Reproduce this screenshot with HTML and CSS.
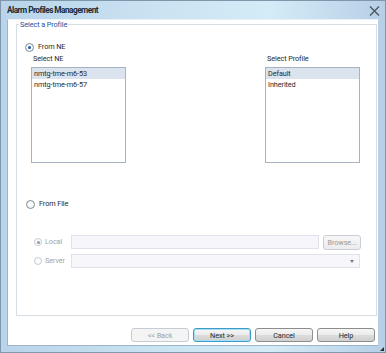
FILE: index.html
```html
<!DOCTYPE html>
<html>
<head>
<meta charset="utf-8">
<link rel="stylesheet" href="styles.css">
</head>
<body>
<div class="window">
  <div class="titlebar">
    <span class="title">Alarm Profiles Management</span>
    <span class="close">
      <svg width="11" height="10" viewBox="0 0 11 10"><path d="M1 0.5 L10 9.5 M10 0.5 L1 9.5" stroke="#4a5864" stroke-width="1.4" fill="none"/></svg>
    </span>
  </div>
  <div class="client">
    <fieldset class="group">
      <legend class="legend">Select a Profile</legend>
      <div class="radio-row from-ne">
        <span class="radio checked"></span><span class="rlabel">From NE</span>
      </div>
      <div class="lists">
        <div class="listcol">
          <div class="caption">Select NE</div>
          <div class="listbox">
            <div class="item sel">nmtg-tme-m6-53</div>
            <div class="item">nmtg-tme-m6-57</div>
          </div>
        </div>
        <div class="listcol">
          <div class="caption">Select Profile</div>
          <div class="listbox">
            <div class="item sel">Default</div>
            <div class="item">Inherited</div>
          </div>
        </div>
      </div>
      <div class="radio-row from-file">
        <span class="radio"></span><span class="rlabel">From File</span>
      </div>
      <div class="file-rows">
        <div class="frow">
          <span class="radio small dis checked"></span><span class="rlabel dis">Local</span>
          <span class="field"></span>
          <span class="browse">Browse...</span>
        </div>
        <div class="frow">
          <span class="radio small dis"></span><span class="rlabel dis">Server</span>
          <span class="combo"><span class="arrow"></span></span>
        </div>
      </div>
    </fieldset>
    <div class="buttons">
      <span class="btn disabled">&lt;&lt; Back</span>
      <span class="btn focus">Next &gt;&gt;</span>
      <span class="btn">Cancel</span>
      <span class="btn">Help</span>
    </div>
  </div>
  <span class="grip"></span>
</div>
</body>
</html>
```
FILE: styles.css
```css
* { box-sizing: border-box; }
html, body { margin: 0; padding: 0; }
body {
  width: 386px; height: 353px; overflow: hidden;
  font-family: Roboto, "Open Sans", sans-serif;
  font-size: 7.3px; letter-spacing: -0.1px; color: #2a2a2a;
}
.window {
  position: relative;
  width: 386px; height: 353px;
  border: 1px solid #7f97ab;
  background: linear-gradient(90deg, #b9d3ea 0%, #c9e3f2 40%, #d3ecf7 70%, #b7cfe6 100%);
  display: flex; flex-direction: column;
}
.titlebar {
  height: 18px; flex: none;
  display: flex; align-items: center; justify-content: space-between;
  padding: 0 5px 0 6px;
}
.title {
  font-family: Roboto, sans-serif;
  font-weight: 700; font-size: 8.3px; color: #1e2a36;
  letter-spacing: -0.55px;
}
.close { display: flex; align-items: center; padding-top: 2px; }
.client {
  flex: 1;
  margin: 0 7px 6px 6px;
  background: #fff;
  border-left: 1px solid #9fb4c6;
  border-bottom: 1px solid #9fb4c6;
  border-top: 1px solid #e8f1f8;
  display: flex; flex-direction: column;
  padding: 0 1px 0 8px;
}
.group {
  margin: 0; padding: 0;
  border: 1px solid #d6dde3;
  height: 296px;
  min-width: 0;
}
.legend {
  padding: 0 1px; margin-left: 2px;
  color: #2552a0; line-height: 9px;
}
.radio-row { display: flex; align-items: center; }
.from-ne { margin: 13px 0 0 8px; height: 10px; }
.radio {
  width: 9px; height: 9px; border-radius: 50%;
  border: 1px solid #7d8b98;
  background: radial-gradient(circle, #ffffff 0%, #eef2f6 100%);
  position: relative;
  flex: none;
}
.radio.checked::after {
  content: ""; position: absolute; left: 2px; top: 2px;
  width: 3px; height: 3px; border-radius: 50%;
  background: #1c56a8;
}
.rlabel { margin-left: 4px; line-height: 10px; }
.lists { display: flex; justify-content: space-between; margin: 2px 16px 0 14px; }
.caption { line-height: 10px; margin-left: 2px; margin-bottom: 3px; }
.listbox {
  width: 95px; height: 96px;
  border: 1px solid #a7b3c0;
  background: #fff;
}
.item { height: 11px; line-height: 11px; padding-left: 2px; }
.item.sel { background: #dbe3ef; }
.from-file { margin: 36px 0 0 9px; height: 10px; }
.file-rows { margin: 26px 0 0 17px; display: flex; flex-direction: column; gap: 5px; }
.frow { display: flex; align-items: center; height: 14px; }
.radio.small { width: 8px; height: 8px; }
.radio.dis { border-color: #c5ccd3; background: #fbfbfc; }
.radio.dis.checked::after { left: 1.5px; top: 1.5px; background: #8f99a6; }
.rlabel.dis { color: #a3a3a3; width: 26px; margin-left: 3px; }
.field {
  width: 248px; height: 14px;
  border: 1px solid #dfe2ea; background: #f7f7fb;
}
.browse {
  margin-left: 4px; width: 38px; height: 15px;
  border: 1px solid #c9ced6; border-radius: 3px;
  background: linear-gradient(#f7f7f7, #ececec);
  color: #9b9b9b;
  display: flex; align-items: center; justify-content: center;
}
.combo {
  width: 289px; height: 14px;
  border: 1px solid #dfe2ea; background: #f7f7fb;
  position: relative;
}
.arrow {
  position: absolute; right: 5px; top: 5px;
  border-left: 2.5px solid transparent; border-right: 2.5px solid transparent;
  border-top: 3px solid #7a7a7a;
}
.buttons {
  display: flex; justify-content: flex-end; gap: 4px;
  padding: 12px 2px 0 0;
}
.btn {
  width: 58px; height: 14px;
  border: 1px solid #8d8d8d; border-radius: 3px;
  background: linear-gradient(#f6f6f6 0%, #ebebeb 50%, #dcdcdc 51%, #d0d0d0 100%);
  display: flex; align-items: center; justify-content: center;
}
.btn.disabled { border-color: #c6ccd4; background: #f4f4f4; color: #a0a0a0; }
.btn.focus { border-color: #3c9cc8; box-shadow: inset 0 0 0 1px #a8def2; }
.grip {
  position: absolute; right: 1px; bottom: 1px;
  width: 0; height: 0;
  border-left: 4px solid transparent;
  border-bottom: 4px solid #2a2a2a;
}
```
